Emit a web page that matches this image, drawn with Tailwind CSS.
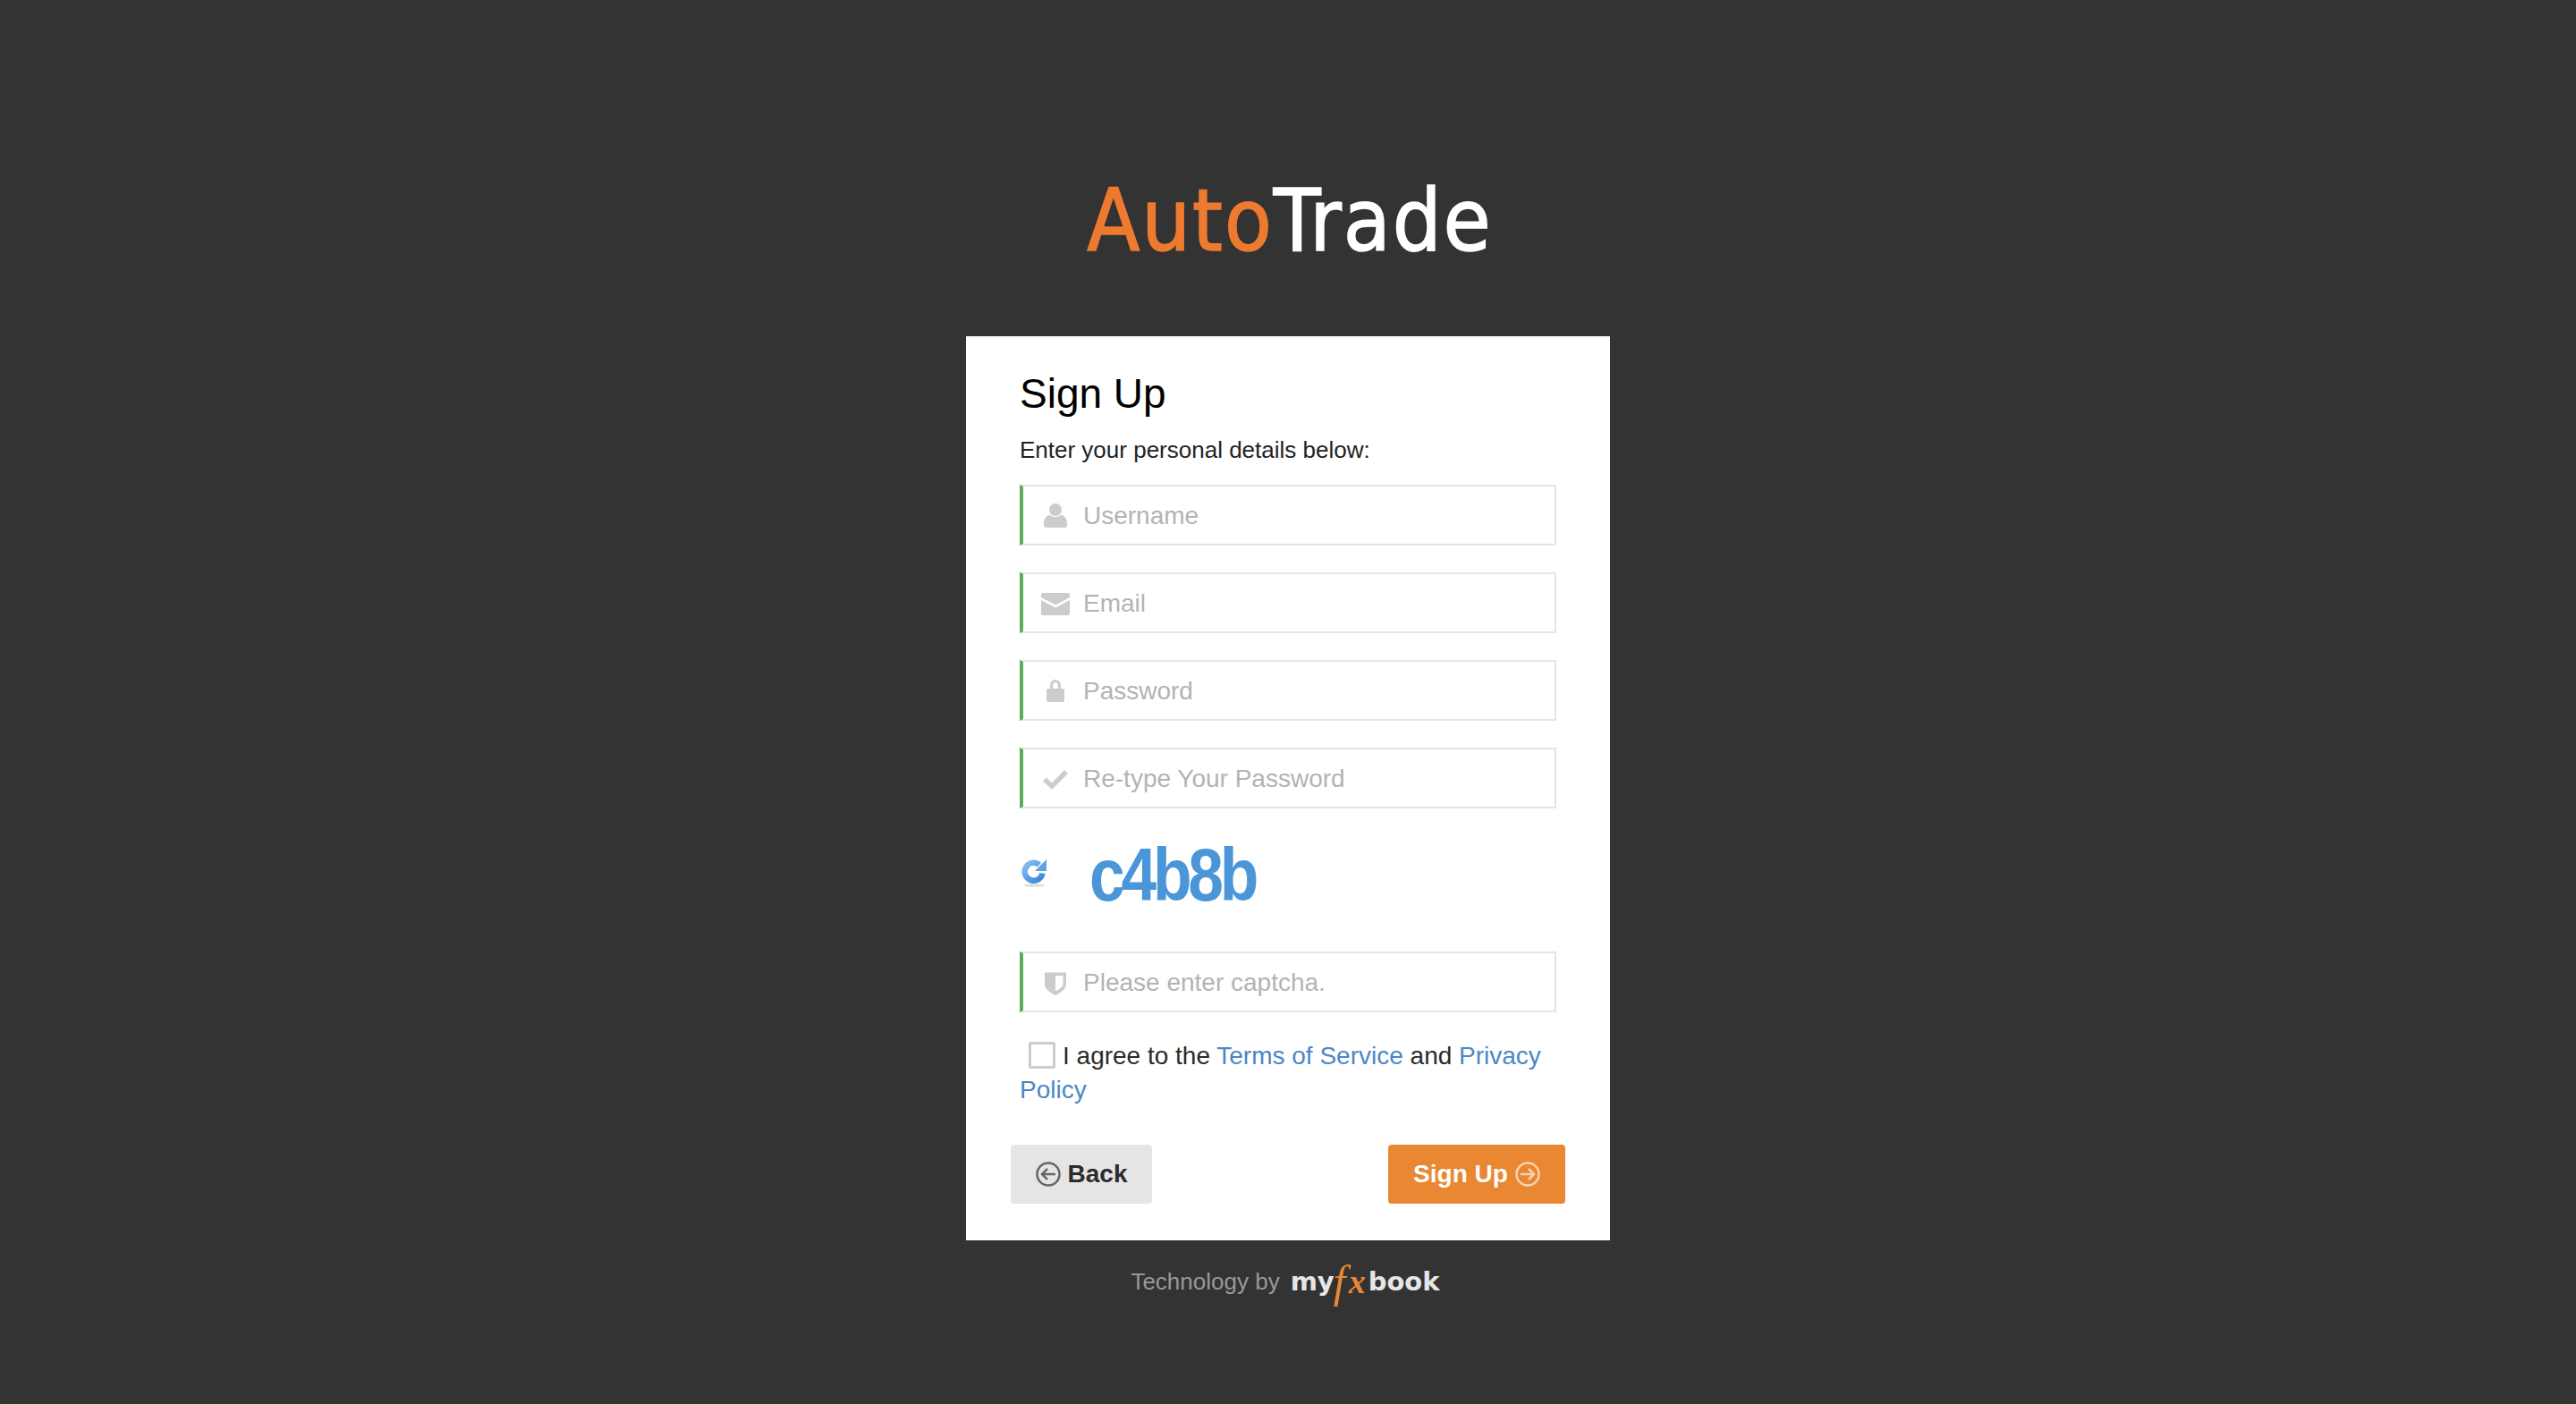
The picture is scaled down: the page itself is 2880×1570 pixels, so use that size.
<!DOCTYPE html>
<html lang="en">
  <head>
    <meta charset="UTF-8" />
    <title>AutoTrade - Sign Up</title>
    <script src="https://cdn.jsdelivr.net/npm/@tailwindcss/browser@4"></script>
  </head>

  <body class="bg-[#333333] min-h-screen font-['Liberation_Sans',Arial,sans-serif] text-[#2b2b2b] flex flex-col items-center">
    <!-- Logo -->
    <div class="h-[376px] w-full flex justify-center pt-[181px] pl-[4px]">
      <div class="font-['DejaVu_Sans_Condensed','DejaVu_Sans',sans-serif] text-[96px] leading-[133px] tracking-[2px] h-[133px] [-webkit-text-stroke:1.5px_currentColor]">
        <span class="text-[#ee7a30]">Auto</span><span class="text-white">Trade</span>
      </div>
    </div>

    <!-- Card -->
    <main class="w-[720px] h-[1011px] bg-white px-[60px] pt-[32px]">
      <h3 class="text-[46px] leading-[64px] text-black">Sign Up</h3>
      <p class="text-[26px] leading-[40px] mt-[11px] mb-[19px] text-[#222222]">Enter your personal details below:</p>

      <div class="h-[68px] flex items-center border-l-[4px] border-l-[#5bab5b] border-y-2 border-r-2 border-y-[#e5e5e5] border-r-[#e5e5e5] mb-[30px]">
        <span class="w-[67px] flex justify-center pl-[5px] pt-[1px]">
          <svg class="w-[26px] h-[27px] text-[#cccccc]" viewBox="0 0 26 27" fill="currentColor"><circle cx="13" cy="7" r="7"/><path d="M0 22c0-6 4-9 7-9 2 1.500 4 2.200 6 2.200s4-.7 6-2.200c3 0 7 3 7 9v2c0 2-1 3-3 3H3c-2 0-3-1-3-3z"/></svg>
        </span>
        <input type="text" placeholder="Username" class="flex-1 min-w-0 text-[28px] outline-none pt-[1px] placeholder:text-[#b3b3b3]" />
      </div>

      <div class="h-[68px] flex items-center border-l-[4px] border-l-[#5bab5b] border-y-2 border-r-2 border-y-[#e5e5e5] border-r-[#e5e5e5] mb-[30px]">
        <span class="w-[67px] flex justify-center pl-[5px] pt-[3px]">
          <svg class="w-[32px] h-[25px] text-[#cccccc]" viewBox="0 0 32 25" fill="currentColor"><path d="M2 0h28c1.200 0 2 .8 2 2v3L16 13.500 0 5V2C0 .8.8 0 2 0z"/><path d="M0 8l16 8.500L32 8v15c0 1.200-.8 2-2 2H2c-1.200 0-2-.8-2-2z"/></svg>
        </span>
        <input type="text" placeholder="Email" class="flex-1 min-w-0 text-[28px] outline-none pt-[1px] placeholder:text-[#b3b3b3]" />
      </div>

      <div class="h-[68px] flex items-center border-l-[4px] border-l-[#5bab5b] border-y-2 border-r-2 border-y-[#e5e5e5] border-r-[#e5e5e5] mb-[30px]">
        <span class="w-[67px] flex justify-center pl-[5px] pt-[1px]">
          <svg class="w-[20px] h-[25px] text-[#cccccc]" viewBox="0 0 20 25" fill="currentColor"><path d="M4 10V7c0-4 2.700-7 6-7s6 3 6 7v3h2c1.200 0 2 .8 2 2v11c0 1.200-.8 2-2 2H2c-1.200 0-2-.8-2-2V12c0-1.200.8-2 2-2zm3 0h6V7c0-2.200-1.300-4-3-4S7 4.800 7 7z"/></svg>
        </span>
        <input type="password" placeholder="Password" class="flex-1 min-w-0 text-[28px] outline-none pt-[1px] placeholder:text-[#b3b3b3]" />
      </div>

      <div class="h-[68px] flex items-center border-l-[4px] border-l-[#5bab5b] border-y-2 border-r-2 border-y-[#e5e5e5] border-r-[#e5e5e5]">
        <span class="w-[67px] flex justify-center pl-[5px] pt-[3px]">
          <svg class="w-[28px] h-[22px] text-[#cccccc]" viewBox="0 0 28 22" fill="currentColor"><path d="M0 12.500l4-4 6 6L24 0l4 4-18 18z"/></svg>
        </span>
        <input type="password" placeholder="Re-type Your Password" class="flex-1 min-w-0 text-[28px] outline-none pt-[1px] placeholder:text-[#b3b3b3]" />
      </div>

      <!-- Captcha -->
      <div class="h-[160px] flex items-center pb-[12px]">
        <svg class="w-[30px] h-[34px] ml-[2px] mb-[4px]" viewBox="0 0 30 34">
          <defs>
            <linearGradient id="refresh" gradientUnits="userSpaceOnUse" x1="0" y1="1" x2="24" y2="29">
              <stop offset="0" stop-color="#9ccaf2" />
              <stop offset="1" stop-color="#2f80d6" />
            </linearGradient>
          </defs>
          <ellipse cx="14" cy="31" rx="12" ry="2" fill="#e2e2e2" />
          <path d="M20 8A10 10 0 1 0 23.500 17.500" fill="none" stroke="url(#refresh)" stroke-width="6.500" />
          <path d="M28 2v13H15z" fill="#5ba3e6" />
        </svg>
        <span class="ml-[46px] font-bold text-[84px] tracking-[-5px] leading-none text-[#4a96d8] blur-[0.7px] origin-left scale-x-[0.85]">c4b8b</span>
      </div>

      <div class="h-[68px] flex items-center border-l-[4px] border-l-[#5bab5b] border-y-2 border-r-2 border-y-[#e5e5e5] border-r-[#e5e5e5]">
        <span class="w-[67px] flex justify-center pl-[5px] pt-[3px]">
          <svg class="w-[24px] h-[27px] text-[#cccccc]" viewBox="0 0 24 27" fill="currentColor"><path d="M0 1.500h24v13c0 5-5 9-12 12.500C5 23.500 0 19.500 0 14.500zM12 5v17.500c5-2.700 8.500-5.300 8.500-8.500V5z" fill-rule="evenodd"/></svg>
        </span>
        <input type="text" placeholder="Please enter captcha." class="flex-1 min-w-0 text-[28px] outline-none pt-[1px] placeholder:text-[#b3b3b3]" />
      </div>

      <!-- Terms -->
      <p class="text-[28px] leading-[38px] mt-[30px]">
        <span class="inline-block w-[30px] h-[30px] border-[3px] border-[#cccccc] rounded-[2px] ml-[10px] mr-[8px] align-[-5px]"></span>I agree to the <a href="#" class="text-[#4b87c5]">Terms of Service</a> and <a href="#" class="text-[#4b87c5]">Privacy</a><br /><a href="#" class="text-[#4b87c5]">Policy</a>
      </p>

      <!-- Buttons -->
      <div class="flex justify-between -mx-[10px] mt-[42px]">
        <button class="h-[66px] w-[158px] bg-[#e5e5e5] rounded-[4px] text-[28px] font-bold text-[#2b2b2b] flex items-center justify-center gap-[8px]">
          <svg class="w-[28px] h-[28px]" viewBox="0 0 28 28" fill="none" stroke="#666666" stroke-width="2.500"><circle cx="14" cy="14" r="12.500"/><path d="M22 14H7M13 8l-6 6 6 6"/></svg>
          Back
        </button>
        <button class="h-[66px] w-[198px] bg-[#e98733] rounded-[4px] text-[28px] font-bold text-white flex items-center justify-center gap-[8px]">
          Sign Up
          <svg class="w-[28px] h-[28px]" viewBox="0 0 28 28" fill="none" stroke="#f7d3b2" stroke-width="2.500"><circle cx="14" cy="14" r="12.500"/><path d="M6 14h15M15 8l6 6-6 6"/></svg>
        </button>
      </div>
    </main>

    <!-- Footer -->
    <div class="flex items-center mt-[22px] h-[48px] pr-[6px]">
      <span class="text-[26px] text-[#999999]">Technology by</span>
      <span class="ml-[12px] font-['DejaVu_Sans',sans-serif] font-bold text-[29px] leading-[48px] text-[#e6e6e6] flex items-center">my<span class="font-['Liberation_Serif',serif] italic font-normal text-[#e98733] text-[50px] leading-[48px] ml-[-1px] mr-[2px]">f</span><span class="font-['Liberation_Serif',serif] italic font-bold text-[#e98733] text-[38px] leading-[48px] ml-[1px] mr-[3px]">x</span>book</span>
    </div>
  </body>
</html>
